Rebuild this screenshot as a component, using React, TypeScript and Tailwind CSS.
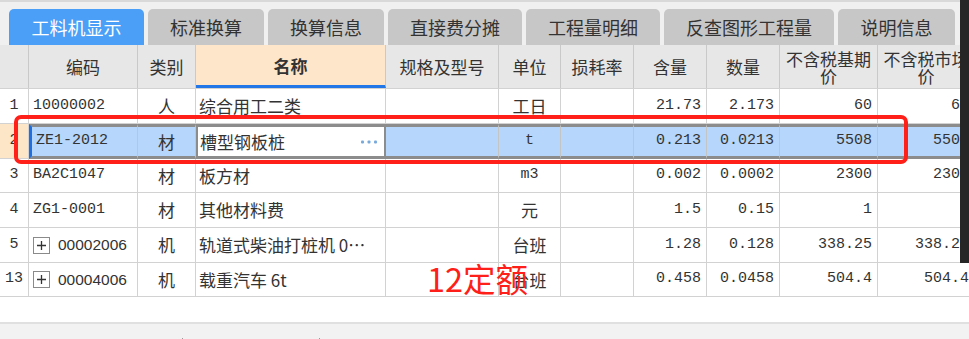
import React from 'react'

const grid =
  'grid grid-cols-[29px_109px_58px_190px_113px_62px_73px_73px_73px_98px_97px]'

const tabs = ['工料机显示', '标准换算', '换算信息', '直接费分摊', '工程量明细', '反查图形工程量', '说明信息']
const tabWidths = ['w-[135px]', 'w-[116px]', 'w-[116px]', 'w-[134px]', 'w-[134px]', 'w-[170px]', 'w-[117px]']

type Row = {
  no: string
  code: string
  plus?: boolean
  cat: string
  name: string
  unit: string
  qty: string
  amt: string
  base: string
  mkt: string
  h: string
}

const rows: Row[] = [
  { no: '1', code: '10000002', cat: '人', name: '综合用工二类', unit: '工日', qty: '21.73', amt: '2.173', base: '60', mkt: '60', h: 'h-[35px]' },
  { no: '2', code: 'ZE1-2012', cat: '材', name: '槽型钢板桩', unit: 't', qty: '0.213', amt: '0.0213', base: '5508', mkt: '5508', h: 'h-[35px]' },
  { no: '3', code: 'BA2C1047', cat: '材', name: '板方材', unit: 'm3', qty: '0.002', amt: '0.0002', base: '2300', mkt: '2300', h: 'h-[34px]' },
  { no: '4', code: 'ZG1-0001', cat: '材', name: '其他材料费', unit: '元', qty: '1.5', amt: '0.15', base: '1', mkt: '1', h: 'h-[35px]' },
  { no: '5', code: '00002006', plus: true, cat: '机', name: '轨道式柴油打桩机 0…', unit: '台班', qty: '1.28', amt: '0.128', base: '338.25', mkt: '338.25', h: 'h-[35px]' },
  { no: '13', code: '00004006', plus: true, cat: '机', name: '载重汽车 6t', unit: '台班', qty: '0.458', amt: '0.0458', base: '504.4', mkt: '504.4', h: 'h-[34px]' },
]

const mono = "font-['Liberation_Mono','Noto_Sans_CJK_SC',monospace] text-[15px]"
const line = 'border-r border-b border-[#d2d2d2]'

function PlusBox() {
  return (
    <span className="mr-[8px] flex h-[17px] w-[17px] items-center justify-center border border-[#8a8a8a] bg-white">
      <svg width="11" height="11" viewBox="0 0 11 11">
        <path d="M5.5 1v9M1 5.5h9" stroke="#333" strokeWidth="1.3" />
      </svg>
    </span>
  )
}

function Dots() {
  return (
    <svg width="16" height="4" viewBox="0 0 16 4">
      <rect x="0" y="0.5" width="3" height="3" rx="1" fill="#78a9db" />
      <rect x="6.5" y="0.5" width="3" height="3" rx="1" fill="#78a9db" />
      <rect x="13" y="0.5" width="3" height="3" rx="1" fill="#78a9db" />
    </svg>
  )
}

function DataRow({ r }: { r: Row }) {
  const sel = r.no === '2'
  const c = sel
    ? 'border-r border-r-[#c4c4c4] border-y-[3px] border-y-[#8c8c8c] bg-[#b6d6fb]'
    : `${line} bg-white`
  return (
    <div className={`${grid} ${r.h}`}>
      <div className={`${line} flex items-center justify-center ${mono} ${sel ? 'bg-[#fde5c8]' : 'bg-white'}`}>
        {r.no}
      </div>
      <div
        className={`${c} flex items-center pl-[4px] ${sel ? 'border-l-[3px] border-l-[#1f6fe0] pl-[2px]' : ''} ${
          r.plus ? "font-['Liberation_Sans',sans-serif] text-[15.5px]" : mono
        }`}
      >
        {r.plus && <PlusBox />}
        {r.code}
      </div>
      <div className={`${c} flex items-center justify-center`}>{r.cat}</div>
      {sel ? (
        <div className="flex items-center justify-between border-y-[3px] border-x-2 border-[#8c8c8c] bg-white pl-[2px] pr-[7px]">
          <span>{r.name}</span>
          <Dots />
        </div>
      ) : (
        <div className={`${c} flex items-center overflow-hidden whitespace-nowrap pl-[3px]`}>{r.name}</div>
      )}
      <div className={c} />
      <div className={`${c} flex items-center justify-center ${r.unit === 't' || r.unit === 'm3' ? mono : ''}`}>
        {r.unit}
      </div>
      <div className={c} />
      <div className={`${c} flex items-center justify-end pr-[5px] ${mono}`}>{r.qty}</div>
      <div className={`${c} flex items-center justify-end pr-[5px] ${mono}`}>{r.amt}</div>
      <div className={`${c} flex items-center justify-end pr-[5px] ${mono}`}>{r.base}</div>
      <div className={`${c} flex items-center justify-end pr-[5px] ${mono}`}>{r.mkt}</div>
    </div>
  )
}

export default function App() {
  const head = 'border-r border-[#c9c9c9] bg-[#e7e7e7] flex items-center justify-center text-center'
  return (
    <div className="relative h-[339px] w-[969px] overflow-hidden bg-white font-['Noto_Sans_CJK_SC',sans-serif] text-[17px] text-[#333]">
      {/* tabs */}
      <div className="flex h-[45px] gap-[4px] border-t-2 border-[#d9d9d9] bg-[#f0f0f0] pl-[9px] pt-[7px]">
        {tabs.map((t, i) => (
          <div
            key={t}
            className={`flex shrink-0 items-center justify-center rounded-t-[5px] text-[18px] ${tabWidths[i]} ${
              i === 0 ? 'bg-[#4b9ff7] text-white' : 'bg-[#c7c7c7] text-[#333]'
            }`}
          >
            {t}
          </div>
        ))}
      </div>

      {/* header */}
      <div className={`${grid} h-[44px] border-b border-[#d2d2d2] leading-[17px]`}>
        <div className={head} />
        <div className={head}>编码</div>
        <div className={head}>类别</div>
        <div className="flex items-center justify-center border-b-[3px] border-r border-b-[#2477e6] border-r-[#c9c9c9] bg-[#fde6c9] font-bold">
          名称
        </div>
        <div className={head}>规格及型号</div>
        <div className={head}>单位</div>
        <div className={head}>损耗率</div>
        <div className={head}>含量</div>
        <div className={head}>数量</div>
        <div className={`${head} px-[4px]`}>不含税基期价</div>
        <div className={`${head} px-[4px]`}>不含税市场价</div>
      </div>

      {/* rows */}
      {rows.map(r => (
        <DataRow key={r.no} r={r} />
      ))}

      <div className="h-[27px] border-b-2 border-[#e0e0e0] bg-white" />
      <div className="flex h-[20px] items-end bg-[#f2f2f2]">
        <div className="ml-[182px] h-[6px] w-px bg-[#9a9a9a]" />
        <div className="ml-[136px] h-[6px] w-px bg-[#9a9a9a]" />
      </div>

      {/* annotations */}
      <div className="absolute left-[14px] top-[115px] h-[49px] w-[894px] rounded-[7px] border-4 border-[#ff2119]" />
      <div className="absolute left-[427px] top-[258px] text-[32.5px] leading-[40px] text-[#ff1f1a]">12定额</div>
      <div className="absolute right-0 top-0 h-[263px] w-[9px] bg-[#262626]" />
    </div>
  )
}
